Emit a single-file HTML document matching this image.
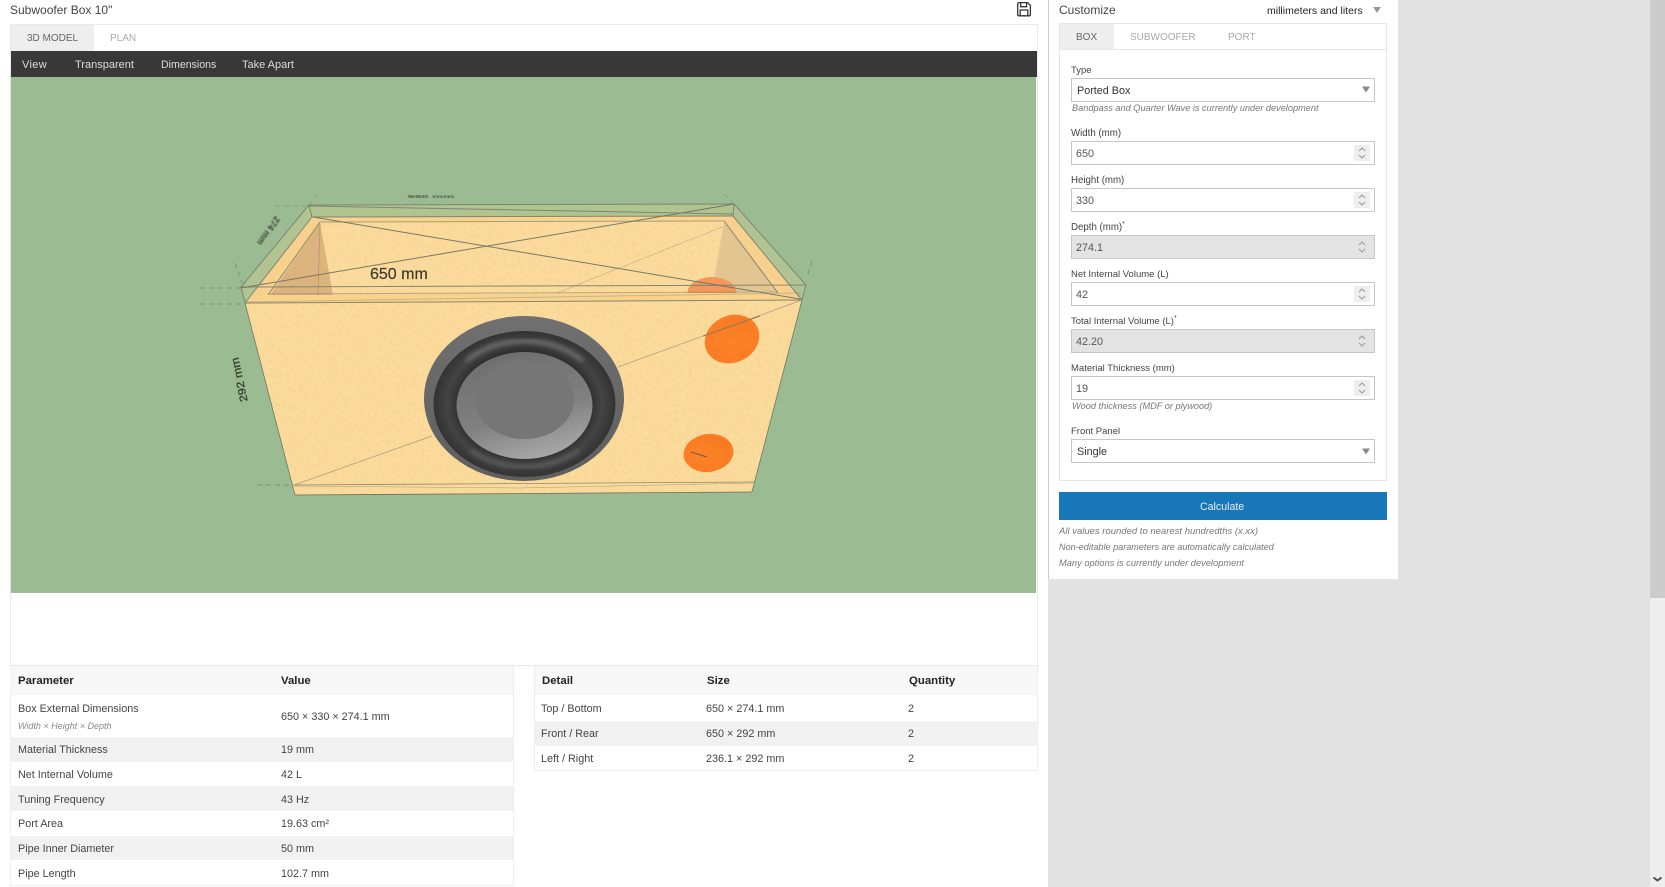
<!DOCTYPE html>
<html lang="en">
<head>
<meta charset="utf-8">
<title>Subwoofer Box 10"</title>
<style>
html,body{margin:0;padding:0;width:1665px;height:887px;overflow:hidden;background:#fff}
body{position:relative;font-family:"Liberation Sans",Arial,sans-serif;color:#444}
.a{position:absolute;box-sizing:border-box}
.t{position:absolute;white-space:nowrap;line-height:14px;font-size:11px;transform:translateY(1px)}
.l{font-size:9.5px;color:#444}
.h{font-size:9.2px;font-style:italic;color:#777}
.th{font-weight:bold;font-size:11.4px;color:#222}
.td{color:#444;font-size:10.8px}
.inp{position:absolute;left:1071px;width:304px;height:24px;border:1px solid #c6c6c6;background:#fff;box-sizing:border-box}
.inp.d{background:#e3e3e3}
.val{position:absolute;left:1076px;font-size:10.8px;line-height:14px;color:#555;transform:translateY(1px)}
.sp{position:absolute;left:1354px;width:16px;height:16px;background:#eee}
</style>
</head>
<body>
<!-- page gray areas -->
<div class="a" style="left:1048px;top:0;width:602px;height:887px;background:#e2e2e2"></div>
<div class="a" style="left:1048px;top:0;width:350px;height:579px;background:#fff;border-left:1px solid #ccc"></div>
<!-- scrollbar -->
<div class="a" style="left:1650px;top:0;width:15px;height:887px;background:#eee"></div>
<div class="a" style="left:1650px;top:0;width:15px;height:598px;background:#ccc"></div>
<svg class="a" style="left:1650px;top:872px" width="15" height="15"><path d="M3.5 5.5 L7.5 8.5 L11.5 5.5" fill="none" stroke="#505050" stroke-width="2"/></svg>

<!-- left header -->
<div class="t" style="left:10px;top:2px;font-size:12px;color:#444">Subwoofer Box 10"</div>
<svg class="a" style="left:1016px;top:1px" width="16" height="16" viewBox="0 0 16 16"><path d="M1.7 2.8 Q1.7 1.6 2.9 1.6 L11.6 1.6 L14.4 4.4 L14.4 13.6 Q14.4 14.8 13.2 14.8 L2.9 14.8 Q1.7 14.8 1.7 13.6 Z M4.6 1.8 L4.6 5.7 L10.6 5.7 L10.6 1.8 M4.2 14.6 L4.2 9 L11.8 9 L11.8 14.6" fill="none" stroke="#333" stroke-width="1.3"/></svg>

<!-- left panel -->
<div class="a" style="left:10px;top:24px;width:1028px;height:642px;border:1px solid #e8e8e8;background:#fff"></div>
<div class="a" style="left:11px;top:25px;width:83px;height:26px;background:#eee"></div>
<div class="t" style="left:27px;top:31px;font-size:10px;color:#666">3D MODEL</div>
<div class="t" style="left:110px;top:31px;font-size:10px;color:#aaa">PLAN</div>
<div class="a" style="left:11px;top:51px;width:1026px;height:26px;background:#383838"></div>
<div class="t" style="left:22px;top:57px;color:#ddd;letter-spacing:.35px">View</div>
<div class="t" style="left:75px;top:57px;color:#ddd">Transparent</div>
<div class="t" style="left:161px;top:57px;color:#ddd;font-size:10.6px">Dimensions</div>
<div class="t" style="left:242px;top:57px;color:#ddd">Take Apart</div>
<div class="a" style="left:11px;top:77px;width:1025px;height:516px;background:#9bbb92"></div>

<!-- 3D model -->
<svg class="a" style="left:0;top:0" width="1665" height="887" viewBox="0 0 1665 887">
<defs>
<filter id="wood" x="0" y="0" width="100%" height="100%">
<feTurbulence type="fractalNoise" baseFrequency="0.28" numOctaves="3" seed="4" result="n"/>
<feColorMatrix in="n" type="matrix" values="0 0 0 0 0.85  0 0 0 0 0.6  0 0 0 0 0.25  0 0 0 -1 0.62" result="c"/>
<feComposite in="c" in2="SourceAlpha" operator="in" result="s"/>
<feMerge><feMergeNode in="SourceGraphic"/><feMergeNode in="s"/></feMerge>
</filter>
<filter id="bl"><feGaussianBlur stdDeviation="0.35"/></filter>
<filter id="bl2"><feGaussianBlur stdDeviation="0.8"/></filter>
<filter id="bl3"><feGaussianBlur stdDeviation="2"/></filter>
<radialGradient id="sur" cx="50%" cy="50%" r="50%">
<stop offset="0.72" stop-color="#2e2e2e"/>
<stop offset="0.85" stop-color="#444"/>
<stop offset="0.95" stop-color="#383838"/>
<stop offset="1" stop-color="#333"/>
</radialGradient>
<linearGradient id="cone" x1="0.25" y1="0" x2="0.6" y2="1">
<stop offset="0" stop-color="#6e6e6e"/>
<stop offset="0.6" stop-color="#808080"/>
<stop offset="1" stop-color="#a8a8a8"/>
</linearGradient>
<linearGradient id="rim" x1="0" y1="0" x2="0" y2="1">
<stop offset="0" stop-color="#707070"/>
<stop offset="1" stop-color="#5e5e5e"/>
</linearGradient>
<linearGradient id="pin" x1="0.9" y1="0" x2="0.4" y2="0.6">
<stop offset="0" stop-color="#ec721e"/>
<stop offset="0.4" stop-color="#f87c22"/>
<stop offset="1" stop-color="#fb8026"/>
</linearGradient>
<clipPath id="dome"><rect x="680" y="270" width="70" height="23"/></clipPath>
</defs>

<!-- interior -->
<polygon points="312,217 733,216 802,300 245,303" fill="#f9d28c"/>
<polygon points="320,222 724,221 778,293 268,295" fill="#fcdc9c" filter="url(#wood)"/>
<polygon points="320,223 270,295 333,295" fill="#dcb37c"/>
<polygon points="724,222 778,292 712,292" fill="#e3c592"/>
<line x1="320" y1="223" x2="318" y2="295" stroke="#a89878" stroke-width="0.8"/>
<ellipse cx="712" cy="293" rx="24.5" ry="16" fill="#f3975a" clip-path="url(#dome)"/>
<line x1="722" y1="227" x2="557" y2="293" stroke="#b8a885" stroke-width="0.7" stroke-dasharray="2 0.6"/>

<!-- glass tint strips -->
<polygon points="309,205 734,204 733,216 312,217" fill="#afc48f"/>
<polygon points="309,205 312,217 245,303 241,287" fill="#b3c491" opacity="0.9"/>
<polygon points="734,204 733,216 802,300 806,285" fill="#b1c493" opacity="0.9"/>
<polygon points="312,217 245,303 255,303 320,222" fill="#f7d08e"/>
<polygon points="733,216 802,300 790,300 724,221" fill="#f7d08e"/>

<!-- front face -->
<polygon points="245,303 802,300 752,492 295,495" fill="#fcdc9c" filter="url(#wood)"/>
<line x1="245" y1="303" x2="295" y2="495" stroke="#6f7a5f" stroke-width="0.8"/>
<line x1="802" y1="300" x2="752" y2="492" stroke="#6f7a5f" stroke-width="0.8"/>
<line x1="295" y1="495" x2="752" y2="492" stroke="#6c6c5c" stroke-width="0.8"/>
<path d="M294 485 L754 482" stroke="#8d8a70" stroke-width="0.8" fill="none"/>
<path d="M294 486 L520 488 L754 483" stroke="#aa9d78" stroke-width="0.5" fill="none"/>

<!-- faint diagonal -->
<line x1="294" y1="485" x2="432" y2="436" stroke="#a89c80" stroke-width="0.7"/>
<line x1="618" y1="367" x2="802" y2="300" stroke="#a89c80" stroke-width="0.7"/>

<!-- woofer -->
<ellipse cx="524" cy="398.5" rx="100" ry="82.5" fill="url(#rim)"/>
<ellipse cx="524.5" cy="404" rx="91" ry="73" fill="url(#sur)"/>
<path d="M466 361 A80 63 0 0 1 583 361" fill="none" stroke="#707070" stroke-width="4" filter="url(#bl3)"/>
<path d="M470 450 A80 63 0 0 0 579 450" fill="none" stroke="#5c5c5c" stroke-width="4" filter="url(#bl3)"/>
<ellipse cx="524.5" cy="405.5" rx="68" ry="53.5" fill="url(#cone)"/>
<ellipse cx="524.5" cy="399.5" rx="49.5" ry="39.5" fill="#767676"/>

<!-- ports -->
<g transform="rotate(-25 732 339)">
<ellipse cx="732" cy="339" rx="28" ry="23.5" fill="#fb7d25"/>
<ellipse cx="736" cy="337" rx="21" ry="17.5" fill="url(#pin)"/>
</g>
<line x1="703" y1="336" x2="760" y2="316" stroke="#8c7a5f" stroke-width="1"/>
<g transform="rotate(-8 708.5 453)">
<ellipse cx="708.5" cy="453" rx="25" ry="19" fill="#fb7d25"/>
<ellipse cx="711" cy="451" rx="19" ry="14" fill="url(#pin)"/>
</g>
<line x1="691" y1="452" x2="707" y2="457" stroke="#6b5b52" stroke-width="1"/>

<!-- wireframe -->
<g fill="none" stroke="#7d8270" stroke-width="1" opacity="0.95">
<polygon points="309,205 734,204 806,285 241,287"/>
<line x1="241" y1="287" x2="245" y2="303"/>
<line x1="806" y1="285" x2="802" y2="300"/>
<line x1="309" y1="205" x2="312" y2="217"/>
<line x1="734" y1="204" x2="733" y2="216"/>
<line x1="312" y1="217" x2="733" y2="216"/>
<line x1="320" y1="222" x2="724" y2="221" stroke-opacity="0.7"/>
<line x1="309" y1="206" x2="733" y2="214"/>
<line x1="313" y1="217" x2="800" y2="299" stroke="#6f7468"/>
<line x1="241" y1="288" x2="734" y2="204" stroke="#6f7468"/>
<line x1="245" y1="303" x2="802" y2="300"/>
<line x1="268" y1="294" x2="778" y2="292" stroke-opacity="0.6"/>
<line x1="245" y1="302" x2="802" y2="293" stroke-opacity="0.4"/>
<line x1="312" y1="217" x2="245" y2="303"/>
<line x1="733" y1="216" x2="802" y2="300"/>
<line x1="320" y1="222" x2="268" y2="295"/>
<line x1="724" y1="221" x2="778" y2="293"/>
</g>

<!-- dimension guides -->
<g fill="none" stroke="#6f8f6c" stroke-width="0.8" stroke-dasharray="5 4">
<line x1="200" y1="288" x2="241" y2="288"/>
<line x1="200" y1="304" x2="245" y2="304"/>
<line x1="257" y1="485" x2="294" y2="485"/>
<line x1="275" y1="206" x2="309" y2="206" opacity="0.6"/>
<line x1="309" y1="205" x2="318" y2="195" opacity="0.6"/>
<line x1="235" y1="263" x2="242" y2="283"/>
<line x1="724" y1="194" x2="734" y2="204" opacity="0.6"/>
<line x1="812" y1="261" x2="807" y2="278"/>
</g>

<!-- dimension labels -->
<text x="370" y="279" font-family="'Liberation Sans',sans-serif" font-size="16" fill="#3a3a30" stroke="#3a3a30" stroke-width="0.2" filter="url(#bl)">650 mm</text>
<text transform="translate(243,379) rotate(-102) scale(1,0.85)" text-anchor="middle" font-family="'Liberation Sans',sans-serif" font-size="12.5" fill="#2f3a2c" stroke="#2f3a2c" stroke-width="0.3" filter="url(#bl)">292 mm</text>
<text transform="translate(266,229) rotate(125) scale(0.8,0.8)" text-anchor="middle" font-family="'Liberation Sans',sans-serif" font-size="11" font-weight="bold" fill="#3c4a3a" filter="url(#bl2)">274 mm</text>
<text transform="translate(431,198) scale(1,0.33)" text-anchor="middle" font-family="'Liberation Sans',sans-serif" font-size="12.5" font-weight="bold" fill="#4d5d4b" filter="url(#bl2)">650 mm</text>
</svg>

<!-- left table -->
<div class="a" style="left:10px;top:666px;width:504px;height:220px;border:1px solid #eee;border-top:0;background:#fff"></div>
<div class="a" style="left:10px;top:666px;width:503px;height:29px;background:#f7f7f7"></div>
<div class="a" style="left:10px;top:737px;width:503px;height:25px;background:#f1f1f1"></div>
<div class="a" style="left:10px;top:786px;width:503px;height:25px;background:#f1f1f1"></div>
<div class="a" style="left:10px;top:836px;width:503px;height:24px;background:#f1f1f1"></div>
<div class="t th" style="left:18px;top:673px">Parameter</div>
<div class="t th" style="left:281px;top:673px">Value</div>
<div class="t td" style="left:18px;top:701px">Box External Dimensions</div>
<div class="t h" style="left:18px;top:718px;font-size:9px;color:#888">Width × Height × Depth</div>
<div class="t td" style="left:281px;top:709px">650 × 330 × 274.1 mm</div>
<div class="t td" style="left:18px;top:742px">Material Thickness</div>
<div class="t td" style="left:281px;top:742px">19 mm</div>
<div class="t td" style="left:18px;top:767px">Net Internal Volume</div>
<div class="t td" style="left:281px;top:767px">42 L</div>
<div class="t td" style="left:18px;top:792px">Tuning Frequency</div>
<div class="t td" style="left:281px;top:792px">43 Hz</div>
<div class="t td" style="left:18px;top:816px">Port Area</div>
<div class="t td" style="left:281px;top:816px">19.63 cm²</div>
<div class="t td" style="left:18px;top:841px">Pipe Inner Diameter</div>
<div class="t td" style="left:281px;top:841px">50 mm</div>
<div class="t td" style="left:18px;top:866px">Pipe Length</div>
<div class="t td" style="left:281px;top:866px">102.7 mm</div>

<!-- right table -->
<div class="a" style="left:534px;top:666px;width:504px;height:105px;border:1px solid #eee;border-top:0;background:#fff"></div>
<div class="a" style="left:535px;top:666px;width:502px;height:29px;background:#f7f7f7"></div>
<div class="a" style="left:535px;top:721px;width:502px;height:25px;background:#f1f1f1"></div>
<div class="t th" style="left:542px;top:673px">Detail</div>
<div class="t th" style="left:707px;top:673px">Size</div>
<div class="t th" style="left:909px;top:673px">Quantity</div>
<div class="t td" style="left:541px;top:701px">Top / Bottom</div>
<div class="t td" style="left:706px;top:701px">650 × 274.1 mm</div>
<div class="t td" style="left:908px;top:701px">2</div>
<div class="t td" style="left:541px;top:726px">Front / Rear</div>
<div class="t td" style="left:706px;top:726px">650 × 292 mm</div>
<div class="t td" style="left:908px;top:726px">2</div>
<div class="t td" style="left:541px;top:751px">Left / Right</div>
<div class="t td" style="left:706px;top:751px">236.1 × 292 mm</div>
<div class="t td" style="left:908px;top:751px">2</div>

<!-- customize panel -->
<div class="t" style="left:1059px;top:2px;font-size:12px;color:#444">Customize</div>
<div class="t" style="left:1267px;top:3px;font-size:10.5px;color:#222">millimeters and liters</div>
<svg class="a" style="left:1372px;top:6px" width="10" height="8"><path d="M1 1 H9 L5 7 Z" fill="#999"/></svg>

<div class="a" style="left:1059px;top:23px;width:328px;height:458px;border:1px solid #e6e6e6"></div>
<div class="a" style="left:1060px;top:24px;width:54px;height:25px;background:#eee"></div>
<div class="a" style="left:1060px;top:49px;width:326px;height:1px;background:#e6e6e6"></div>
<div class="t" style="left:1076px;top:30px;font-size:10px;color:#666">BOX</div>
<div class="t" style="left:1130px;top:30px;font-size:10px;color:#aaa">SUBWOOFER</div>
<div class="t" style="left:1228px;top:30px;font-size:10px;color:#aaa">PORT</div>

<div class="t l" style="left:1071px;top:63px">Type</div>
<div class="inp" style="top:78px"></div>
<div class="val" style="left:1077px;top:83px;color:#333">Ported Box</div>
<svg class="a" style="left:1362px;top:86px" width="8" height="7"><path d="M0 0.5 H8 L4 6.5 Z" fill="#888"/></svg>
<div class="t h" style="left:1072px;top:100px">Bandpass and Quarter Wave is currently under development</div>

<div class="t l" style="left:1071px;top:126px;font-size:9.7px">Width (mm)</div>
<div class="inp" style="top:141px"></div>
<div class="val" style="top:146px">650</div>
<div class="sp" style="top:145px"></div>
<svg class="a" style="left:1354px;top:145px" width="16" height="16"><path d="M5 6 L8 3 L11 6 M5 10 L8 13 L11 10" fill="none" stroke="#999" stroke-width="1"/></svg>

<div class="t l" style="left:1071px;top:173px;font-size:9.7px">Height (mm)</div>
<div class="inp" style="top:188px"></div>
<div class="val" style="top:193px">330</div>
<div class="sp" style="top:192px"></div>
<svg class="a" style="left:1354px;top:192px" width="16" height="16"><path d="M5 6 L8 3 L11 6 M5 10 L8 13 L11 10" fill="none" stroke="#999" stroke-width="1"/></svg>

<div class="t l" style="left:1071px;top:220px;font-size:9.7px">Depth (mm)<sup style="font-size:7px;line-height:0">*</sup></div>
<div class="inp d" style="top:235px"></div>
<div class="val" style="top:240px">274.1</div>
<svg class="a" style="left:1354px;top:239px" width="16" height="16"><path d="M5 6 L8 3 L11 6 M5 10 L8 13 L11 10" fill="none" stroke="#999" stroke-width="1"/></svg>

<div class="t l" style="left:1071px;top:267px">Net Internal Volume (L)</div>
<div class="inp" style="top:282px"></div>
<div class="val" style="top:287px">42</div>
<div class="sp" style="top:286px"></div>
<svg class="a" style="left:1354px;top:286px" width="16" height="16"><path d="M5 6 L8 3 L11 6 M5 10 L8 13 L11 10" fill="none" stroke="#999" stroke-width="1"/></svg>

<div class="t l" style="left:1071px;top:314px">Total Internal Volume (L)<sup style="font-size:7px;line-height:0">*</sup></div>
<div class="inp d" style="top:329px"></div>
<div class="val" style="top:334px">42.20</div>
<svg class="a" style="left:1354px;top:333px" width="16" height="16"><path d="M5 6 L8 3 L11 6 M5 10 L8 13 L11 10" fill="none" stroke="#999" stroke-width="1"/></svg>

<div class="t l" style="left:1071px;top:361px">Material Thickness (mm)</div>
<div class="inp" style="top:376px"></div>
<div class="val" style="top:381px">19</div>
<div class="sp" style="top:380px"></div>
<svg class="a" style="left:1354px;top:380px" width="16" height="16"><path d="M5 6 L8 3 L11 6 M5 10 L8 13 L11 10" fill="none" stroke="#999" stroke-width="1"/></svg>
<div class="t h" style="left:1072px;top:398px">Wood thickness (MDF or plywood)</div>

<div class="t l" style="left:1071px;top:424px">Front Panel</div>
<div class="inp" style="top:439px"></div>
<div class="val" style="left:1077px;top:444px;color:#333">Single</div>
<svg class="a" style="left:1362px;top:448px" width="8" height="7"><path d="M0 0.5 H8 L4 6.5 Z" fill="#888"/></svg>

<div class="a" style="left:1059px;top:492px;width:328px;height:28px;background:#1777b8"></div>
<div class="t" style="left:1200px;top:499px;color:#e6eef5;font-size:10.6px">Calculate</div>
<div class="t h" style="left:1059px;top:524px;font-size:9.5px">All values rounded to nearest hundredths (x.xx)</div>
<div class="t h" style="left:1059px;top:539px;font-size:9.1px">Non-editable parameters are automatically calculated</div>
<div class="t h" style="left:1059px;top:555px;font-size:9.3px">Many options is currently under development</div>
</body>
</html>
